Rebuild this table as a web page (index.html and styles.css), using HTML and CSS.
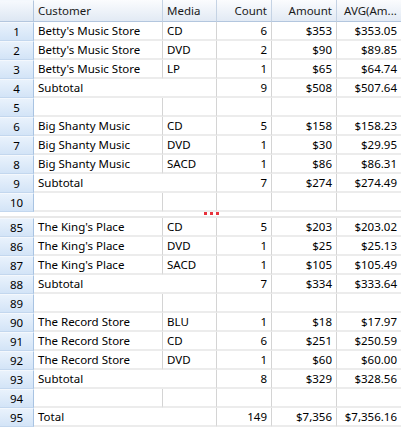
FILE: index.html
```html
<!DOCTYPE html>
<html>
<head>
<meta charset="utf-8">
<link rel="stylesheet" href="styles.css">
</head>
<body>
<div class="grid">
  <div class="row head">
    <div class="rh corner"></div>
    <div class="c">Customer</div>
    <div class="c">Media</div>
    <div class="c r">Count</div>
    <div class="c r">Amount</div>
    <div class="c last">AVG(Am...</div>
  </div>

  <div class="row"><div class="rh">1</div><div class="c">Betty's Music Store</div><div class="c">CD</div><div class="c r">6</div><div class="c r">$353</div><div class="c r">$353.05</div></div>
  <div class="row"><div class="rh">2</div><div class="c">Betty's Music Store</div><div class="c">DVD</div><div class="c r">2</div><div class="c r">$90</div><div class="c r">$89.85</div></div>
  <div class="row"><div class="rh">3</div><div class="c">Betty's Music Store</div><div class="c">LP</div><div class="c r">1</div><div class="c r">$65</div><div class="c r">$64.74</div></div>
  <div class="row"><div class="rh">4</div><div class="c span">Subtotal</div><div class="c r">9</div><div class="c r">$508</div><div class="c r">$507.64</div></div>
  <div class="row"><div class="rh">5</div><div class="c"></div><div class="c"></div><div class="c"></div><div class="c"></div><div class="c"></div></div>
  <div class="row"><div class="rh">6</div><div class="c">Big Shanty Music</div><div class="c">CD</div><div class="c r">5</div><div class="c r">$158</div><div class="c r">$158.23</div></div>
  <div class="row"><div class="rh">7</div><div class="c">Big Shanty Music</div><div class="c">DVD</div><div class="c r">1</div><div class="c r">$30</div><div class="c r">$29.95</div></div>
  <div class="row"><div class="rh">8</div><div class="c">Big Shanty Music</div><div class="c">SACD</div><div class="c r">1</div><div class="c r">$86</div><div class="c r">$86.31</div></div>
  <div class="row"><div class="rh">9</div><div class="c span">Subtotal</div><div class="c r">7</div><div class="c r">$274</div><div class="c r">$274.49</div></div>
  <div class="row"><div class="rh">10</div><div class="c"></div><div class="c"></div><div class="c"></div><div class="c"></div><div class="c"></div></div>

  <div class="gap"><span class="dots"><i></i><i></i><i></i></span></div>

  <div class="row"><div class="rh">85</div><div class="c">The King's Place</div><div class="c">CD</div><div class="c r">5</div><div class="c r">$203</div><div class="c r">$203.02</div></div>
  <div class="row"><div class="rh">86</div><div class="c">The King's Place</div><div class="c">DVD</div><div class="c r">1</div><div class="c r">$25</div><div class="c r">$25.13</div></div>
  <div class="row"><div class="rh">87</div><div class="c">The King's Place</div><div class="c">SACD</div><div class="c r">1</div><div class="c r">$105</div><div class="c r">$105.49</div></div>
  <div class="row"><div class="rh">88</div><div class="c span">Subtotal</div><div class="c r">7</div><div class="c r">$334</div><div class="c r">$333.64</div></div>
  <div class="row"><div class="rh">89</div><div class="c"></div><div class="c"></div><div class="c"></div><div class="c"></div><div class="c"></div></div>
  <div class="row"><div class="rh">90</div><div class="c">The Record Store</div><div class="c">BLU</div><div class="c r">1</div><div class="c r">$18</div><div class="c r">$17.97</div></div>
  <div class="row"><div class="rh">91</div><div class="c">The Record Store</div><div class="c">CD</div><div class="c r">6</div><div class="c r">$251</div><div class="c r">$250.59</div></div>
  <div class="row"><div class="rh">92</div><div class="c">The Record Store</div><div class="c">DVD</div><div class="c r">1</div><div class="c r">$60</div><div class="c r">$60.00</div></div>
  <div class="row"><div class="rh">93</div><div class="c span">Subtotal</div><div class="c r">8</div><div class="c r">$329</div><div class="c r">$328.56</div></div>
  <div class="row"><div class="rh">94</div><div class="c"></div><div class="c"></div><div class="c"></div><div class="c"></div><div class="c"></div></div>
  <div class="row"><div class="rh">95</div><div class="c span">Total</div><div class="c r">149</div><div class="c r">$7,356</div><div class="c r">$7,356.16</div></div>
</div>
</body>
</html>
```

FILE: styles.css
```css
html, body {
  margin: 0;
  padding: 0;
  background: #ffffff;
}
.grid {
  width: 401px;
  font-family: "Noto Sans", "Open Sans", sans-serif;
  font-size: 11.5px;
  color: #000;
}
.row {
  display: grid;
  grid-template-columns: 34px 129px 54px 55px 65px 64px;
  height: 19px;
}
.row > div {
  box-sizing: border-box;
  height: 19px;
  line-height: 17px;
  white-space: nowrap;
  overflow: hidden;
}
.c {
  padding: 0 4px;
  border-right: 1px solid #d4d4d4;
  border-bottom: 2px solid #ececec;
}
.c:last-child { border-right: none; }
.c.r { text-align: right; padding-right: 4px; }
.c.span { grid-column: span 2; }
.rh {
  text-align: center;
  background: linear-gradient(#e9f2fc, #d3e4f7);
  border-right: 1px solid #a8c3e2;
  border-bottom: 1px solid #c3d7ee;
  border-top: 1px solid #f4f8fd;
  color: #000;
}
.row.head {
  height: 22px;
}
.row.head > div {
  height: 22px;
  line-height: 21px;
  background: linear-gradient(#fbfcfe, #e2eaf4);
  border-bottom: 1px solid #b3c6de;
  border-right: 1px solid #c5d3e4;
  color: #1a1a1a;
}
.row.head > .rh.corner {
  background: linear-gradient(#f6f9fd, #dde7f3);
  border-right: 1px solid #b3c6de;
}
.row.head > .c.last { border-right: none; padding-left: 7px; }
.gap {
  height: 6px;
  box-sizing: border-box;
  border-bottom: 2px solid #e8e8e8;
  position: relative;
  background: #fff;
}
.dots {
  position: absolute;
  left: 204px;
  top: 0;
  display: flex;
  gap: 3px;
}
.dots i {
  display: block;
  width: 3px;
  height: 3px;
  background: #e8323c;
}
```
